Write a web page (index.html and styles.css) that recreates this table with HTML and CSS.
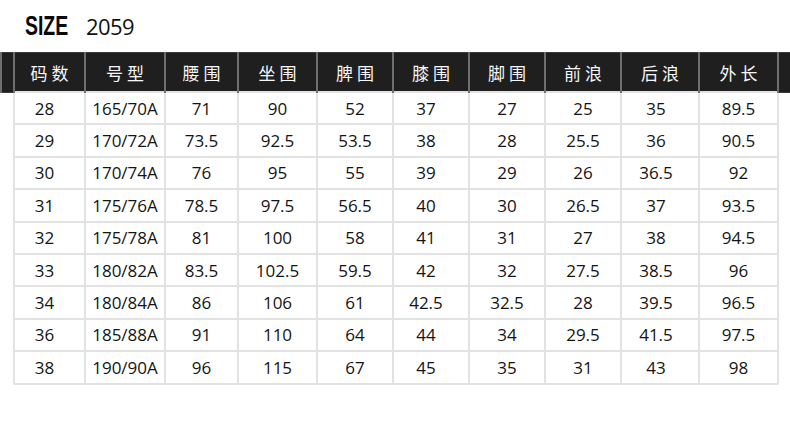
FILE: index.html
```html
<!DOCTYPE html>
<html lang="zh">
<head>
<meta charset="utf-8">
<link rel="stylesheet" href="styles.css">
</head>
<body>
<div class="page">
  <div class="title">
    <span class="size">SIZE</span>
    <span class="code">2059</span>
  </div>
  <table class="chart">
    <colgroup>
      <col class="c-edge"><col class="c1"><col class="c2"><col class="c3"><col class="c4"><col class="c5"><col class="c6"><col class="c7"><col class="c8"><col class="c9"><col class="c10"><col class="c-edge">
    </colgroup>
    <thead>
      <tr>
        <th class="edge"></th><th>码数</th><th>号型</th><th>腰围</th><th>坐围</th><th>脾围</th><th>膝围</th><th>脚围</th><th>前浪</th><th>后浪</th><th>外长</th><th class="edge"></th>
      </tr>
    </thead>
    <tbody>
      <tr><td class="edge"></td><td class="n1">28</td><td>165/70A</td><td>71</td><td>90</td><td>52</td><td class="n6">37</td><td>27</td><td>25</td><td class="n9">35</td><td>89.5</td><td class="edge"></td></tr>
      <tr><td class="edge"></td><td class="n1">29</td><td>170/72A</td><td>73.5</td><td>92.5</td><td>53.5</td><td class="n6">38</td><td>28</td><td>25.5</td><td class="n9">36</td><td>90.5</td><td class="edge"></td></tr>
      <tr><td class="edge"></td><td class="n1">30</td><td>170/74A</td><td>76</td><td>95</td><td>55</td><td class="n6">39</td><td>29</td><td>26</td><td class="n9">36.5</td><td>92</td><td class="edge"></td></tr>
      <tr><td class="edge"></td><td class="n1">31</td><td>175/76A</td><td>78.5</td><td>97.5</td><td>56.5</td><td class="n6">40</td><td>30</td><td>26.5</td><td class="n9">37</td><td>93.5</td><td class="edge"></td></tr>
      <tr><td class="edge"></td><td class="n1">32</td><td>175/78A</td><td>81</td><td>100</td><td>58</td><td class="n6">41</td><td>31</td><td>27</td><td class="n9">38</td><td>94.5</td><td class="edge"></td></tr>
      <tr><td class="edge"></td><td class="n1">33</td><td>180/82A</td><td>83.5</td><td>102.5</td><td>59.5</td><td class="n6">42</td><td>32</td><td>27.5</td><td class="n9">38.5</td><td>96</td><td class="edge"></td></tr>
      <tr><td class="edge"></td><td class="n1">34</td><td>180/84A</td><td>86</td><td>106</td><td>61</td><td class="n6">42.5</td><td>32.5</td><td>28</td><td class="n9">39.5</td><td>96.5</td><td class="edge"></td></tr>
      <tr><td class="edge"></td><td class="n1">36</td><td>185/88A</td><td>91</td><td>110</td><td>64</td><td class="n6">44</td><td>34</td><td>29.5</td><td class="n9">41.5</td><td>97.5</td><td class="edge"></td></tr>
      <tr><td class="edge"></td><td class="n1">38</td><td>190/90A</td><td>96</td><td>115</td><td>67</td><td class="n6">45</td><td>35</td><td>31</td><td class="n9">43</td><td>98</td><td class="edge"></td></tr>
    </tbody>
  </table>
</div>
</body>
</html>
```

FILE: styles.css
```css
html, body {
  margin: 0;
  padding: 0;
  background: #ffffff;
}

.page {
  width: 790px;
  height: 422px;
  overflow: hidden;
  font-family: "Open Sans", "Noto Sans", "Noto Sans CJK SC", sans-serif;
  color: #111;
}

.title {
  height: 52px;
  box-sizing: border-box;
  padding-left: 25px;
  display: flex;
  align-items: baseline;
  gap: 18px;
  line-height: 1;
  padding-top: 13px;
}

.size {
  display: inline-block;
  width: 43px;
  white-space: nowrap;
  font-family: "Liberation Sans", "Arial", sans-serif;
  font-weight: 700;
  font-size: 27px;
  transform: scaleX(0.72);
  transform-origin: left center;
  color: #0a0a0a;
}

.code {
  font-family: "Open Sans", "Liberation Sans", sans-serif;
  font-size: 22px;
  letter-spacing: -0.6px;
  color: #111;
}

.chart {
  width: 790px;
  table-layout: fixed;
  border-collapse: collapse;
  border-spacing: 0;
}

.c-edge { width: 13px; }
.c1 { width: 71px; }
.c2 { width: 80px; }
.c3 { width: 73px; }
.c4 { width: 79px; }
.c5 { width: 76px; }
.c6 { width: 76px; }
.c7 { width: 76px; }
.c8 { width: 76px; }
.c9 { width: 78px; }
.c10 { width: 79px; }

.chart th {
  height: 38px;
  padding: 0;
  background: #1f1f1f;
  color: #f7f7f7;
  font-family: "Noto Sans CJK SC", "Noto Sans", sans-serif;
  font-weight: 400;
  font-size: 17px;
  letter-spacing: 4px;
  text-indent: 4px;
  text-align: center;
  vertical-align: middle;
  border-left: 2px solid #6e6e6e;
  border-right: 2px solid #6e6e6e;
  border-top: 1px solid #3a3a3a;
  border-bottom: 1px solid #3a3a3a;
}

.chart td {
  height: 30.4px;
  padding: 0;
  font-size: 17px;
  text-align: center;
  vertical-align: middle;
  border: 2px solid #e2e2e2;
  color: #141414;
}

.chart td.edge {
  border-top: none;
  border-bottom: none;
  background: #fff;
}

.chart tbody td:first-child { border-left: none; }
.chart tbody td:last-child { border-right: none; }

.n1 { text-indent: -10px; }
.n6 { text-indent: -10px; }
.n9 { text-indent: -8px; }
```
